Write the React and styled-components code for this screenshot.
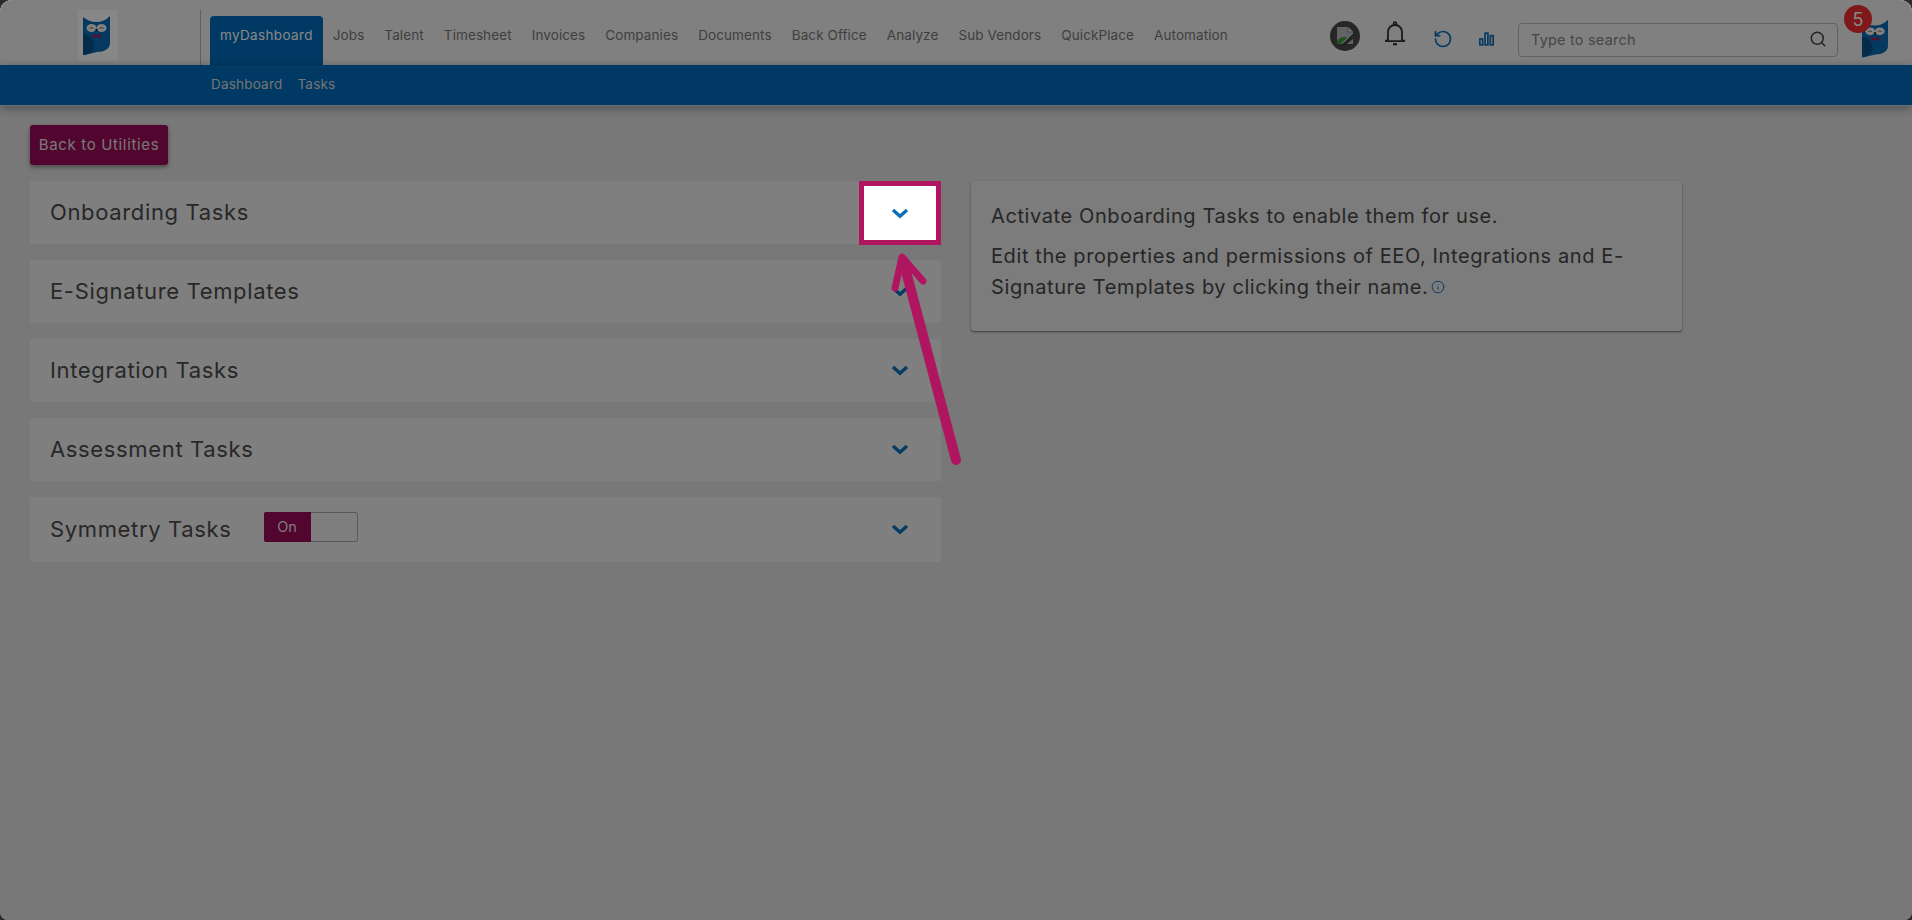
import React from 'react';
import styled, { createGlobalStyle } from 'styled-components';
import { RotateCcw, Search, Info } from 'lucide-react';

const GlobalStyle = createGlobalStyle`
  html, body {
    margin: 0;
    padding: 0;
    height: 100%;
    background: #2b2b2b;
    font-family: Inter, "Liberation Sans", sans-serif;
  }
  #root {
    height: 100%;
  }
  * {
    box-sizing: border-box;
  }
`;

const Page = styled.div`
  position: relative;
  height: 920px;
  overflow: hidden;
  border-radius: 12px 12px 8px 8px;
  background: #e2e2e2;
`;

const Overlay = styled.div`
  position: absolute;
  inset: 0;
  z-index: 1;
  background: rgba(0, 0, 0, 0.47);
`;

const TopBar = styled.div`
  display: flex;
  height: 65px;
  background: #f2f2f2;
`;

const LogoCell = styled.div`
  width: 201px;
  height: 55px;
  margin-top: 10px;
  padding-left: 78px;
  border-right: 1px solid #b5b5b5;
`;

const LogoBox = styled.div`
  display: flex;
  justify-content: center;
  align-items: center;
  width: 40px;
  height: 51px;
  padding-right: 3px;
  background: #fff;
`;

const Nav = styled.nav`
  display: flex;
  align-items: flex-end;
  margin-left: 9px;
`;

const Tab = styled.a`
  height: ${(p) => (p.$active ? '49px' : '65px')};
  padding: ${(p) => (p.$active ? '9px' : '25px')} 10px 0;
  border-radius: 4px 4px 0 0;
  font-size: 13.5px;
  line-height: 20px;
  letter-spacing: ${(p) => (p.$active ? '0.35px' : '0.1px')};
  white-space: nowrap;
  color: ${(p) => (p.$active ? '#fff' : '#787878')};
  background: ${(p) => (p.$active ? '#006dbb' : 'transparent')};
`;

const Tools = styled.div`
  display: flex;
  align-items: flex-start;
  gap: 24px;
  margin-left: auto;
  padding-right: 24px;
`;

const Slot = styled.div`
  position: relative;
  display: flex;
  justify-content: center;
  width: ${(p) => p.$w}px;
  margin-top: ${(p) => p.$y}px;
  color: ${(p) => p.$color || '#333'};
`;

const SearchBox = styled.div`
  display: flex;
  align-items: center;
  justify-content: space-between;
  width: 320px;
  height: 34px;
  margin-top: 23px;
  padding: 0 10px 2px 12px;
  border: 1px solid #b8b8b8;
  border-radius: 4px;
  font-size: 14.5px;
  letter-spacing: 0.2px;
  color: #858585;
`;

const Badge = styled.div`
  position: absolute;
  top: -14px;
  left: -18px;
  display: flex;
  align-items: center;
  justify-content: center;
  width: 28px;
  height: 28px;
  border-radius: 50%;
  font-size: 18px;
  color: #fff;
  background: #f03030;
`;

const SubBar = styled.div`
  display: flex;
  gap: 15px;
  height: 41px;
  padding: 9px 0 0 211px;
  border-bottom: 1px solid #c9d6e0;
  box-shadow: 0 2px 9px rgba(0, 0, 0, 0.35);
  position: relative;
  font-size: 13.5px;
  line-height: 20px;
  letter-spacing: 0.2px;
  color: #dcdcdc;
  background: #006dbb;
`;

const Main = styled.main`
  padding: 19px 30px 0;
`;

const BackButton = styled.button`
  display: block;
  width: 138px;
  height: 40px;
  margin-bottom: 16px;
  padding: 0 0 2px;
  border: 0;
  border-radius: 3px;
  box-shadow: 0 2px 4px rgba(0, 0, 0, 0.4);
  font-family: inherit;
  font-size: 15px;
  letter-spacing: 0.65px;
  color: #e2e2e2;
  background: #9b0b57;
`;

const Columns = styled.div`
  display: flex;
  align-items: flex-start;
  gap: 29px;
`;

const CardList = styled.div`
  display: flex;
  flex-direction: column;
  gap: 16px;
  width: 911px;
`;

const Card = styled.div`
  display: flex;
  align-items: flex-start;
  justify-content: space-between;
  height: ${(p) => p.$h || 63}px;
  padding-left: 20px;
  border-radius: 2px;
  background: #f0f0f0;
`;

const CardLabel = styled.div`
  display: flex;
  align-items: center;
  gap: 32px;
  height: 100%;
`;

const CardTitle = styled.span`
  margin-bottom: 2px;
  font-size: 22px;
  letter-spacing: 0.65px;
  color: #4c4c4c;
`;

const Expander = styled.div`
  display: flex;
  align-items: center;
  justify-content: center;
  flex: none;
  width: 82px;
  height: ${(p) => (p.$highlight ? '64px' : '100%')};
  ${(p) => p.$highlight && `
    position: relative;
    z-index: 2;
    border: 5px solid #b0165f;
    background: #fff;
  `}
`;

const Toggle = styled.div`
  display: flex;
  width: 94px;
  height: 30px;
  margin-bottom: 5px;
  border: 1px solid #a8a8a8;
  border-radius: 2px;
`;

const ToggleOn = styled.div`
  width: 47px;
  margin: -1px 0 -1px -1px;
  border-radius: 2px 0 0 2px;
  font-size: 14.5px;
  line-height: 30px;
  text-align: center;
  color: #e4e4e4;
  background: #9b0b57;
`;

const HelpPanel = styled.div`
  width: 711px;
  height: 150px;
  margin-left: 1px;
  padding: 20px 20px;
  border-radius: 3px;
  box-shadow: 0 1px 2px rgba(0, 0, 0, 0.5);
  font-size: 20px;
  line-height: 31px;
  letter-spacing: 0.6px;
  color: #484848;
  background: #eaeaea;
`;

const HelpText = styled.p`
  margin: 0 0 9px;
`;

const InfoMark = styled.span`
  display: inline-block;
  margin-left: 3px;
  vertical-align: 0;
  color: #0a6fb8;
`;

const ArrowLayer = styled.svg`
  position: absolute;
  top: 0;
  left: 0;
  z-index: 3;
  width: 1912px;
  height: 920px;
  pointer-events: none;
`;

const Owl = ({ width, height }) => (
  <svg width={width} height={height} viewBox="0 0 27 39">
    <path d="M0 1 C4 4 8 6 13.5 6 C19 6 23 4 27 0 L27 27 C27 33 21 36 14 36 L2 39 L0 39 Z" fill="#0a6db5" />
    <path d="M0 18 C7 19 11 24 11 30 C11 35 6 38 0 39 Z" fill="#07528c" />
    <ellipse cx="8.5" cy="12" rx="5" ry="4" fill="#f4f4f4" />
    <ellipse cx="18.5" cy="12" rx="5" ry="4" fill="#f4f4f4" />
    <path d="M6.5 12.5 Q8.5 10.5 10.5 12.5 M16.5 12.5 Q18.5 10.5 20.5 12.5" stroke="#555" strokeWidth="0.9" fill="none" />
    <path d="M12 13 L15 13 L13.5 16 Z" fill="#222" />
    <path d="M9.5 18 L13.5 19.6 L17.5 18 L17.5 22 L13.5 20.6 L9.5 22 Z" fill="#b81848" />
  </svg>
);

const Chevron = () => (
  <svg width="18" height="11" viewBox="0 0 18 11">
    <path d="M2 2 L9 8.2 L16 2" fill="none" stroke="#0a6fb8" strokeWidth="3.4" />
  </svg>
);

const BrokenImage = () => (
  <svg width="30" height="30" viewBox="0 0 30 30">
    <circle cx="15" cy="15" r="15" fill="#484848" />
    <path d="M7 6 H18 L23 11 V15 L12 23 H7 Z" fill="#b8bcc0" />
    <path d="M18 6 V11 H23" fill="#ddd" stroke="#888" strokeWidth="1" />
    <path d="M7 23 V20 C10 16 14 15 17 17 L10 23 Z" fill="#3c9a32" />
    <path d="M24 13 L11 26" stroke="#3a3a3a" strokeWidth="1.6" />
    <path d="M23 18 V23 H17 Z" fill="#b8bcc0" />
  </svg>
);

const Bell = () => (
  <svg width="22" height="26" viewBox="0 0 22 26" fill="none" stroke="currentColor" strokeWidth="1.8">
    <path d="M4 19 V11 C4 7 7 4 11 4 C15 4 18 7 18 11 V19" />
    <path d="M1 20 C3 20 4 19.5 4 18 M21 20 C19 20 18 19.5 18 18 M1 20.2 H21" />
    <circle cx="11" cy="2.6" r="1.4" />
    <path d="M9 23.2 H13" strokeWidth="2.2" />
  </svg>
);

const Bars = () => (
  <svg width="18" height="16" viewBox="0 0 18 16" fill="none" stroke="currentColor" strokeWidth="2">
    <rect x="1" y="8" width="3.4" height="7" />
    <rect x="7.3" y="1" width="3.4" height="14" />
    <rect x="13.6" y="4" width="3.4" height="11" />
  </svg>
);

const navItems = ['Jobs', 'Talent', 'Timesheet', 'Invoices', 'Companies', 'Documents', 'Back Office', 'Analyze', 'Sub Vendors', 'QuickPlace', 'Automation'];
const taskGroups = ['E-Signature Templates', 'Integration Tasks', 'Assessment Tasks'];

export default function App() {
  return (
    <Page>
      <GlobalStyle />
      <TopBar>
        <LogoCell>
          <LogoBox>
            <Owl width={27} height={39} />
          </LogoBox>
        </LogoCell>
        <Nav>
          <Tab $active>myDashboard</Tab>
          {navItems.map((item) => <Tab key={item}>{item}</Tab>)}
        </Nav>
        <Tools>
          <Slot $w={30} $y={21}><BrokenImage /></Slot>
          <Slot $w={22} $y={21}><Bell /></Slot>
          <Slot $w={25} $y={29} $color="#0a6fb8"><RotateCcw size={20} strokeWidth={2} /></Slot>
          <Slot $w={15} $y={31} $color="#0a6fb8"><Bars /></Slot>
          <SearchBox>
            Type to search
            <Search size={18} color="#444" />
          </SearchBox>
          <Slot $w={26} $y={19}>
            <Owl width={26} height={39} />
            <Badge>5</Badge>
          </Slot>
        </Tools>
      </TopBar>
      <SubBar>
        <span>Dashboard</span>
        <span>Tasks</span>
      </SubBar>
      <Main>
        <BackButton>Back to Utilities</BackButton>
        <Columns>
          <CardList>
            <Card>
              <CardLabel><CardTitle>Onboarding Tasks</CardTitle></CardLabel>
              <Expander $highlight><Chevron /></Expander>
            </Card>
            {taskGroups.map((group) => (
              <Card key={group}>
                <CardLabel><CardTitle>{group}</CardTitle></CardLabel>
                <Expander><Chevron /></Expander>
              </Card>
            ))}
            <Card $h={65}>
              <CardLabel>
                <CardTitle>Symmetry Tasks</CardTitle>
                <Toggle><ToggleOn>On</ToggleOn></Toggle>
              </CardLabel>
              <Expander><Chevron /></Expander>
            </Card>
          </CardList>
          <HelpPanel>
            <HelpText>Activate Onboarding Tasks to enable them for use.</HelpText>
            <HelpText>
              Edit the properties and permissions of EEO, Integrations and E-Signature Templates by clicking their name.
              <InfoMark><Info size={14} strokeWidth={1.6} /></InfoMark>
            </HelpText>
          </HelpPanel>
        </Columns>
      </Main>
      <Overlay />
      <ArrowLayer viewBox="0 0 1912 920">
        <path d="M956 460 L903 260" fill="none" stroke="#b0165f" strokeWidth="10" strokeLinecap="round" />
        <path d="M895 288 L902 257 L923 281" fill="none" stroke="#b0165f" strokeWidth="7" strokeLinecap="round" strokeLinejoin="round" />
      </ArrowLayer>
    </Page>
  );
}
